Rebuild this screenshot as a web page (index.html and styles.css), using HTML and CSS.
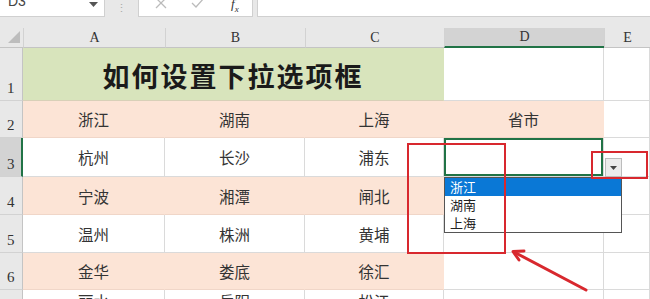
FILE: index.html
```html
<!DOCTYPE html>
<html lang="zh-CN">
<head>
    <meta charset="UTF-8">
    <meta name="viewport" content="width=device-width, initial-scale=1.0">
    <title>如何设置下拉选项框</title>
    <link rel="stylesheet" href="styles.css">
</head>
<body>
    <div class="app">
        <!-- Formula Bar -->
        <div class="formula-bar">
            <div class="name-box">
                <span class="name-text">D3</span>
                <svg class="name-arrow" width="9" height="6" viewBox="0 0 9 6"><path d="M0 0 L9 0 L4.5 5 Z" fill="#555"/></svg>
            </div>
            <div class="bar-sep">⋮</div>
            <div class="fx-buttons">
                <svg width="12" height="12" viewBox="0 0 12 12"><path d="M1 1 L11 11 M11 1 L1 11" stroke="#bbb" stroke-width="1.3"/></svg>
                <svg width="14" height="12" viewBox="0 0 14 12"><path d="M1 6 L5 10 L13 1" stroke="#bbb" stroke-width="1.3" fill="none"/></svg>
                <span class="fx-label">f<sub>x</sub></span>
            </div>
            <div class="formula-input"></div>
        </div>
        <div class="bar-gap"></div>

        <!-- Sheet -->
        <div class="sheet">
            <div class="hdr corner"><span class="corner-tri"></span></div>
            <div class="hdr col">A</div>
            <div class="hdr col">B</div>
            <div class="hdr col">C</div>
            <div class="hdr col active-col">D</div>
            <div class="hdr col">E</div>

            <div class="hdr row">1</div>
            <div class="cell title">如何设置下拉选项框</div>
            <div class="cell"></div>
            <div class="cell"></div>

            <div class="hdr row">2</div>
            <div class="cell peach">浙江</div>
            <div class="cell peach">湖南</div>
            <div class="cell peach">上海</div>
            <div class="cell peach">省市</div>
            <div class="cell"></div>

            <div class="hdr row active-row">3</div>
            <div class="cell">杭州</div>
            <div class="cell">长沙</div>
            <div class="cell">浦东</div>
            <div class="cell selected"></div>
            <div class="cell"></div>

            <div class="hdr row">4</div>
            <div class="cell peach">宁波</div>
            <div class="cell peach">湘潭</div>
            <div class="cell peach">闸北</div>
            <div class="cell"></div>
            <div class="cell"></div>

            <div class="hdr row">5</div>
            <div class="cell">温州</div>
            <div class="cell">株洲</div>
            <div class="cell">黄埔</div>
            <div class="cell"></div>
            <div class="cell"></div>

            <div class="hdr row">6</div>
            <div class="cell peach">金华</div>
            <div class="cell peach">娄底</div>
            <div class="cell peach">徐汇</div>
            <div class="cell"></div>
            <div class="cell"></div>

            <div class="hdr row last">7</div>
            <div class="cell last">丽水</div>
            <div class="cell last">岳阳</div>
            <div class="cell last">松江</div>
            <div class="cell"></div>
            <div class="cell"></div>
        </div>

        <!-- Dropdown overlay -->
        <div class="dd-button">
            <svg width="7" height="4" viewBox="0 0 7 4"><path d="M0 0 L7 0 L3.5 4 Z" fill="#444"/></svg>
        </div>
        <div class="dd-list">
            <div class="dd-item current">浙江</div>
            <div class="dd-item">湖南</div>
            <div class="dd-item">上海</div>
        </div>

        <!-- Annotations -->
        <div class="mark mark-list"></div>
        <div class="mark mark-button"></div>
        <svg class="arrow" width="650" height="299" viewBox="0 0 650 299">
            <path d="M586 290 L514 252" stroke="#d8282e" stroke-width="3" stroke-linecap="round"/>
            <path d="M524 251 L513 251.5 L519 260" stroke="#d8282e" stroke-width="3" fill="none" stroke-linecap="round" stroke-linejoin="round"/>
        </svg>
    </div>
</body>
</html>
```

FILE: styles.css
```css
/* General Reset */
body, html {
    margin: 0;
    padding: 0;
    background-color: #fff;
    font-family: "Noto Sans CJK SC", "Noto Sans", sans-serif;
    color: #333;
}
.app {
    position: relative;
    width: 650px;
    height: 299px;
    overflow: hidden;
    background: #e8e8e8;
}
/* Formula Bar */
.formula-bar {
    display: flex;
    height: 17px;
    background: #e8e8e8;
}
.name-box {
    width: 105px;
    background: #fff;
    border-right: 1px solid #d0d0d0;
    border-bottom: 1px solid #d0d0d0;
    box-sizing: border-box;
    display: flex;
    align-items: flex-start;
    justify-content: space-between;
    padding: 0 6px 0 8px;
    overflow: hidden;
}
.name-text {
    font-family: "Liberation Sans", sans-serif;
    font-size: 14px;
    line-height: 14px;
    margin-top: -6px;
    color: #444;
}
.name-arrow {
    margin-top: 2px;
}
.bar-sep {
    width: 33px;
    text-align: center;
    font-size: 11px;
    line-height: 15px;
    color: #aaa;
}
.fx-buttons {
    width: 115px;
    background: #fff;
    border: 1px solid #d0d0d0;
    border-top: none;
    box-sizing: border-box;
    display: flex;
    align-items: flex-start;
    padding: 0 12px 0 16px;
    gap: 24px;
}
.fx-buttons svg {
    margin-top: -3px;
}
.fx-label {
    font-family: "Liberation Serif", serif;
    font-style: italic;
    font-size: 13px;
    line-height: 12px;
    margin-top: -2px;
    margin-left: 2px;
    color: #333;
}
.fx-label sub {
    font-size: 9px;
}
.formula-input {
    flex: 1;
    margin-left: 4px;
    background: #fff;
    border-left: 1px solid #d0d0d0;
    border-bottom: 1px solid #d0d0d0;
}
.bar-gap {
    height: 11px;
}
/* Sheet Grid */
.sheet {
    display: grid;
    grid-template-columns: 23px 142px 140px 139px 160px 46px;
    grid-template-rows: 20px 53px 37px 39px 38px 38px 37px 30px;
    background: #fff;
}
.hdr {
    background: #e8e8e8;
    box-sizing: border-box;
    font-family: "Liberation Serif", serif;
    font-size: 14px;
    color: #333;
}
.hdr.col {
    display: flex;
    align-items: flex-end;
    justify-content: center;
    border-left: 1px solid #d2d2d2;
    border-bottom: 1px solid #c4c4c4;
    padding-bottom: 1px;
}
.hdr.corner {
    position: relative;
    border-bottom: 1px solid #c4c4c4;
}
.corner-tri {
    position: absolute;
    right: 3px;
    bottom: 4px;
    width: 0;
    height: 0;
    border-left: 12px solid transparent;
    border-bottom: 12px solid #bdbdbd;
}
.hdr.active-col {
    background: #d3d3d3;
    border-bottom: 2px solid #217346;
}
.hdr.row {
    display: flex;
    align-items: flex-end;
    padding: 0 0 3px 7px;
    border-bottom: 1px solid #d2d2d2;
    border-right: 1px solid #c4c4c4;
    font-size: 15px;
}
.hdr.row.last {
    align-items: flex-start;
    padding: 7px 0 0 7px;
}
.hdr.active-row {
    background: #d3d3d3;
    border-right: 2px solid #217346;
}
.cell {
    box-sizing: border-box;
    display: flex;
    align-items: center;
    justify-content: center;
    border-right: 1px solid #dadada;
    border-bottom: 1px solid #dadada;
    font-size: 15.5px;
    color: #333;
}
.cell.last {
    align-items: flex-start;
    line-height: 16px;
    padding-top: 3px;
}
.cell.title {
    grid-column: span 3;
    background: #d8e4bc;
    border-right-color: #d8e4bc;
    border-bottom-color: #d8d0b8;
    font-size: 27px;
    font-weight: 600;
    letter-spacing: 2px;
    color: #1a1a1a;
    padding-top: 2px;
}
.cell.peach {
    background: #fce4d6;
    border-right-color: #fce4d6;
    border-bottom-color: #f0d6c8;
}
.cell.selected {
    box-shadow: inset 0 0 0 2px #217346;
}
/* Dropdown */
.dd-button {
    position: absolute;
    left: 605px;
    top: 158px;
    width: 17px;
    height: 19px;
    box-sizing: border-box;
    background: #ececec;
    border: 1px solid #bcbcbc;
    display: flex;
    align-items: center;
    justify-content: center;
}
.dd-list {
    position: absolute;
    left: 444px;
    top: 177px;
    width: 178px;
    height: 56px;
    box-sizing: border-box;
    background: #fff;
    border: 1px solid #555;
}
.dd-item {
    height: 18px;
    line-height: 18px;
    padding-left: 5px;
    font-size: 13px;
    color: #222;
}
.dd-item.current {
    background: #0a78d6;
    color: #fff;
}
/* Annotations */
.mark {
    position: absolute;
    border: 2px solid #d8282e;
    box-sizing: border-box;
}
.mark-list {
    left: 407px;
    top: 143px;
    width: 99px;
    height: 111px;
}
.mark-button {
    left: 591px;
    top: 151px;
    width: 57px;
    height: 28px;
}
.arrow {
    position: absolute;
    left: 0;
    top: 0;
    pointer-events: none;
}
```
